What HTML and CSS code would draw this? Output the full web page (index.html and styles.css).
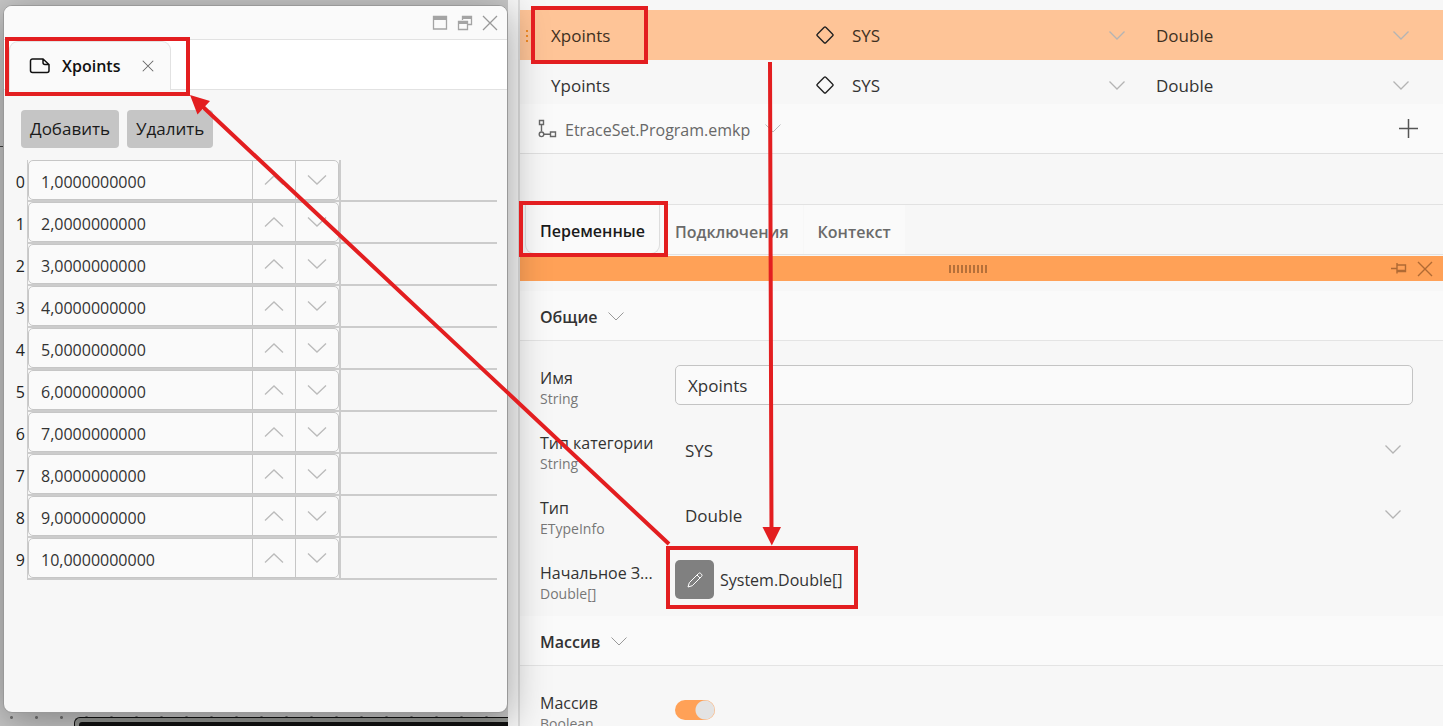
FILE: index.html
```html
<!DOCTYPE html>
<html lang="ru">
<head>
<meta charset="utf-8">
<title>Xpoints</title>
<link rel="stylesheet" href="styles.css">
</head>
<body>
<svg class="defs" aria-hidden="true">
  <symbol id="down" viewBox="0 0 16 9"><path d="M.5.5 8 8 15.500.5"/></symbol>
  <symbol id="spin-down" viewBox="0 0 20 10"><path d="M1 .5 10 9 19 .5"/></symbol>
  <symbol id="spin-up" viewBox="0 0 20 10"><path d="M1 9.500 10 1 19 9.500"/></symbol>
  <symbol id="cross" viewBox="0 0 16 16"><path d="M1 1 15 15M15 1 1 15"/></symbol>
  <symbol id="diamond" viewBox="0 0 18 18"><path d="M8.200 1.300a1.100 1.100 0 0 1 1.600 0l6.900 6.900a1.100 1.100 0 0 1 0 1.600l-6.900 6.900a1.100 1.100 0 0 1-1.600 0L1.300 9.800a1.100 1.100 0 0 1 0-1.600Z"/></symbol>
</svg>

<section class="canvas">
  <div class="node"><div class="node-body"></div></div>
  <div class="window">
    <header class="titlebar">
      <button class="icon-btn" aria-label="Развернуть"><svg width="16" height="16"><path class="fill" d="M1 1h14v4H1z"/><path d="M1.500 1.500h13v12.500h-13z"/></svg></button>
      <button class="icon-btn" aria-label="Окна"><svg width="16" height="16"><path d="M5.500 5V1.500h9v8H11M1.500 6.500h9v8h-9z"/><path class="fill" d="M5 1h10v3H5zM1 6h10v3H1z"/></svg></button>
      <button class="icon-btn" aria-label="Закрыть"><svg width="16" height="16"><use href="#cross"/></svg></button>
    </header>
    <nav class="doc-tabs">
      <div class="doc-tab">
        <svg class="doc-icon" width="22" height="18"><path d="M3.500 2h10.500l6 5.500v6a2 2 0 0 1-2 2h-14.500a2 2 0 0 1-2-2v-9.500a2 2 0 0 1 2-2ZM14 2v3.500a2 2 0 0 0 2 2h4"/></svg>
        <span>Xpoints</span>
        <button class="tab-close" aria-label="Закрыть вкладку"><svg width="12" height="12"><use href="#cross"/></svg></button>
      </div>
    </nav>
    <div class="content">
      <div class="actions"><button class="action">Добавить</button><button class="action">Удалить</button></div>
      <table class="values"><tbody id="values"></tbody></table>
    </div>
  </div>
</section>

<main class="panel">
  <div class="var-row selected">
    <div class="var-name"><svg class="grip" width="3" height="13"><path d="M0 0h2v2H0zM0 5h2v2H0zM0 10h2v2H0z"/></svg><span>Xpoints</span></div>
    <div class="var-kind"><svg class="diamond" width="18" height="18"><use href="#diamond"/></svg><div class="drop"><select aria-label="Категория Xpoints"><option>SYS</option></select><svg width="16" height="9"><use href="#down"/></svg></div></div>
    <div class="var-type"><div class="drop"><select aria-label="Тип Xpoints"><option>Double</option></select><svg width="16" height="9"><use href="#down"/></svg></div></div>
  </div>
  <div class="var-row last">
    <div class="var-name"><span class="grip-space"></span><span>Ypoints</span></div>
    <div class="var-kind"><svg class="diamond" width="18" height="18"><use href="#diamond"/></svg><div class="drop"><select aria-label="Категория Ypoints"><option>SYS</option></select><svg width="16" height="9"><use href="#down"/></svg></div></div>
    <div class="var-type"><div class="drop"><select aria-label="Тип Ypoints"><option>Double</option></select><svg width="16" height="9"><use href="#down"/></svg></div></div>
  </div>
  <div class="program">
    <svg class="tree" width="19" height="19"><path d="M1.500 1.500h4v4h-4zM3.500 6v6.500M12.500 13h5v4.500h-5zM6 15.300h6.500"/><circle cx="3.500" cy="15.300" r="2.300"/></svg>
    <span>EtraceSet.Program.emkp</span>
    <svg class="chev" width="16" height="9"><use href="#down"/></svg>
    <button class="add" aria-label="Добавить переменную"><svg width="19" height="19"><path d="M9.500 0v19M0 9.500h19"/></svg></button>
  </div>
  <nav class="tabs">
    <button class="tab active">Переменные</button><button class="tab">Подключения</button><button class="tab">Контекст</button>
  </nav>
  <div class="dock">
    <span class="handle"></span>
    <button class="dock-btn" aria-label="Закрепить"><svg width="16" height="11"><path d="M0 5.500h6M6 0v10.500M6 2h8.500v6.500H6M6 7.500h8"/></svg></button>
    <button class="dock-btn" aria-label="Закрыть панель"><svg width="16" height="16"><use href="#cross"/></svg></button>
  </div>
  <h2 class="group">Общие <svg class="chev" width="16" height="9"><use href="#down"/></svg></h2>
  <div class="fields">
    <div class="field"><label for="name">Имя<small>String</small></label><input id="name" class="text" value="Xpoints"></div>
    <div class="field"><label for="cat">Тип категории<small>String</small></label><div class="drop wide"><select id="cat"><option>SYS</option></select><svg width="16" height="9"><use href="#down"/></svg></div></div>
    <div class="field"><label for="type">Тип<small>ETypeInfo</small></label><div class="drop wide"><select id="type"><option>Double</option></select><svg width="16" height="9"><use href="#down"/></svg></div></div>
    <div class="field"><label for="edit">Начальное З...<small>Double[]</small></label><div class="initial"><button id="edit" class="edit"><svg width="16" height="16"><path d="M1 15l1.300-4.300L11.500 1.500a1.600 1.600 0 0 1 2.300 0l.7.700a1.600 1.600 0 0 1 0 2.300L5.300 13.700ZM10 3l3 3"/></svg></button><span>System.Double[]</span></div></div>
  </div>
  <h2 class="group">Массив <svg class="chev" width="16" height="9"><use href="#down"/></svg></h2>
  <div class="fields">
    <div class="field"><label for="array">Массив<small>Boolean</small></label><input id="array" class="toggle" type="checkbox" checked></div>
  </div>
</main>

<svg class="marks" width="1443" height="726" aria-hidden="true">
  <rect x="7" y="39" width="181" height="55"/>
  <rect x="533" y="8" width="113" height="54"/>
  <rect x="521" y="203" width="145" height="52"/>
  <rect x="668" y="548" width="188" height="59"/>
  <path d="M770 62 771.500 530M669 544 202 106"/>
  <path class="head" d="M762.500 527h18.500l-9.200 18.500ZM190 95l20 6-12.500 13.500Z"/>
</svg>
<script src="script.js"></script>
</body>
</html>
```

FILE: styles.css
```css
* { box-sizing: border-box; }
body {
  margin: 0;
  height: 100vh;
  overflow: hidden;
  display: flex;
  position: relative;
  font: 17px/24px "Open Sans", "Noto Sans", sans-serif;
  color: #333;
  background: #f7f7f7;
}
button, input, select { font: inherit; color: inherit; }
button { border: 0; padding: 0; background: none; }
svg { fill: none; stroke: currentColor; flex: none; display: block; }
.defs { position: absolute; width: 0; height: 0; }

.canvas {
  position: relative;
  z-index: 1;
  flex: 0 0 508px;
  background:
    linear-gradient(#444, #444) 0 146px / 100% 1px no-repeat,
    radial-gradient(circle, #777 1px, transparent 2px) -1px 5px / 25px 25px,
    #c8c8c8;
}
.node {
  position: absolute;
  left: 74px;
  right: 0;
  bottom: 0;
  height: 9px;
  padding: 4px 0 0 4px;
  border: solid #111;
  border-width: 1px 0 0 1px;
  border-radius: 6px 0 0 0;
  background: #959793;
}
.node-body { height: 4px; background: #111; border-radius: 3px 0 0 0; }
.window {
  position: absolute;
  inset: 5px 0 13px 3px;
  display: flex;
  flex-direction: column;
  overflow: hidden;
  border: 1px solid #999;
  border-radius: 9px;
  background: #f7f7f7;
  box-shadow: 0 8px 40px rgba(0, 0, 0, .36);
}
.titlebar {
  height: 34px;
  display: flex;
  justify-content: flex-end;
  align-items: center;
  gap: 9px;
  padding-right: 9px;
  background: #fafafa;
  border-bottom: 1px solid #e2e2e2;
  color: #a4a4a4;
}
.icon-btn svg { stroke-width: 1.3; }
.icon-btn:last-child { color: #999; }
.icon-btn .fill { fill: currentColor; stroke: none; }
.doc-tabs { height: 50px; background: #fff; border-bottom: 1px solid #e2e2e2; padding: 1px 0 0 5px; }
.doc-tab {
  width: 162px;
  height: 49px;
  display: flex;
  align-items: center;
  padding: 0 16px 0 19px;
  border: 1px solid #e2e2e2;
  border-bottom: 0;
  border-radius: 9px 9px 0 0;
  background: #fafafa;
  color: #111;
  font-size: 16px;
  font-weight: 600;
}
.doc-icon { margin-right: 11px; stroke-width: 1.5; }
.tab-close { margin-left: auto; color: #666; }
.tab-close svg { stroke-width: 1.4; }
.content { padding: 20px 10px 0 11px; }
.actions { display: flex; gap: 8px; margin: 0 0 12px 6px; }
.action { height: 38px; padding: 0 9px; border-radius: 4px; background: #c5c5c5; color: #1a1a1a; }

.values { width: 100%; table-layout: fixed; border-spacing: 0; font-size: 16px; }
.values th, .values td { padding: 0; height: 42px; }
.values th { width: 12px; font-weight: 400; color: #222; text-align: right; padding: 2px 2px 0 0; }
.values td { border-bottom: 2px solid #ccc; }
.values .cell { width: 314px; border-left: 1px solid #ccc; border-right: 2px solid #ccc; }
.spinner { display: flex; height: 40px; border: 1px solid #c6c6c6; border-radius: 5px; background: #fafafa; overflow: hidden; }
.spinner input { flex: 1; min-width: 0; border: 0; padding: 3px 12px 0; background: none; color: #333; }
.spinner button { width: 43px; border-left: 1px solid #c6c6c6; display: grid; place-items: center; color: #bbb; }
.spinner svg { stroke-width: 1.3; }

.panel { flex: 1; min-width: 0; margin-left: 10px; border-left: 2px solid #ddd; padding-top: 10px; }
.var-row { display: grid; grid-template-columns: 296px 325fr 302fr; height: 50px; align-items: center; }
.var-row.selected { background: #fec497; color: #40301f; }
.var-row.last { height: 44px; align-items: start; }
.var-row.last > div { height: 50px; }
.var-name, .var-kind { display: flex; align-items: center; }
.var-name { padding: 2px 0 0 6px; }
.var-type { display: grid; align-items: center; padding: 0 34px 0 15px; }
.var-kind { gap: 18px; padding-right: 16px; }
.grip, .grip-space { width: 3px; margin-right: 22px; }
.grip { fill: #f08a24; stroke: none; }
.diamond { color: #222; stroke-width: 1.4; }
.drop { flex: 1; display: grid; align-items: center; }
.drop > * { grid-area: 1 / 1; }
.drop select { appearance: none; border: 0; padding: 2px 0 0; background: none; width: 100%; }
.drop > svg { justify-self: end; color: #b4b4b4; stroke-width: 1.3; pointer-events: none; }
.program {
  height: 50px;
  display: flex;
  align-items: center;
  padding: 0 25px 0 18px;
  background: #fafafa;
  border-bottom: 1px solid #e0e0e0;
  color: #686868;
  font-size: 16px;
}
.program span { padding-top: 2px; }
.tree { margin-right: 8px; stroke-width: 1.4; }
.chev { color: #999; }
.program .chev { margin-left: 15px; color: #bbb; }
.add { margin-left: auto; color: #555; }
.add svg { stroke-width: 1.5; }

.tabs { height: 51px; margin-top: 50px; padding-left: 5px; display: flex; gap: 1px; border: solid #e2e2e2; border-width: 1px 0; }
.tab { padding: 4px 14px 0; background: #fafafa; color: #6a6a6a; font-size: 16px; font-weight: 600; }
.tab.active { color: #1a1a1a; border: solid #ddd; border-width: 0 1px 1px; border-radius: 0 0 9px 9px; }
.dock {
  height: 25px;
  margin: 1px 0 10px;
  display: grid;
  grid-template-columns: 1fr 16px 16px;
  gap: 10px;
  align-items: center;
  padding: 0 10px 0 36px;
  background: #ffa157;
  color: #b06a34;
}
.dock-btn svg { stroke-width: 1.4; }
.handle { width: 40px; height: 8px; justify-self: center; background: repeating-linear-gradient(90deg, #b5703a 0 2px, transparent 2px 4px); }
.group {
  margin: 0;
  height: 50px;
  display: flex;
  align-items: center;
  gap: 11px;
  padding: 2px 0 0 20px;
  font-size: 16px;
  font-weight: 600;
  background: #fafafa;
  border-bottom: 1px solid #e4e4e4;
}
.fields { padding: 11px 30px 4px 20px; }
.field { height: 65px; display: grid; grid-template-columns: 135px 1fr; align-items: center; }
.field label { padding-top: 6px; font-size: 16px; line-height: 22px; white-space: nowrap; }
.field small { display: block; font-size: 14px; line-height: 20px; color: #777; }
.text { width: 100%; height: 40px; padding: 2px 12px 0; border: 1px solid #c4c4c4; border-radius: 5px; background: #fafafa; }
.drop.wide { padding: 0 12px 0 10px; }
.initial { display: flex; align-items: center; gap: 6px; font-size: 16px; }
.edit { width: 39px; height: 39px; display: grid; place-items: center; border-radius: 5px; background: #808080; color: #fff; }
.toggle { appearance: none; margin: 0; width: 40px; height: 20px; border-radius: 10px; background: radial-gradient(circle at 30px 10px, #e3e3e3 9px, #ffa157 10px); }

.marks { position: absolute; z-index: 2; left: 0; top: 0; stroke: #e31e20; stroke-width: 4; pointer-events: none; }
.marks .head { fill: #e31e20; stroke: none; }
```

FILE: script.js
```js
const icon = (id) => `<svg width="20" height="10"><use href="#${id}"/></svg>`;
document.getElementById("values").innerHTML = Array.from({ length: 10 }, (_, i) => `
  <tr>
    <th scope="row">${i}</th>
    <td class="cell"><div class="spinner">
      <input value="${i + 1},0000000000" aria-label="Значение ${i}">
      <button aria-label="Больше">${icon("spin-up")}</button>
      <button aria-label="Меньше">${icon("spin-down")}</button>
    </div></td>
    <td></td>
  </tr>`).join("");
```
